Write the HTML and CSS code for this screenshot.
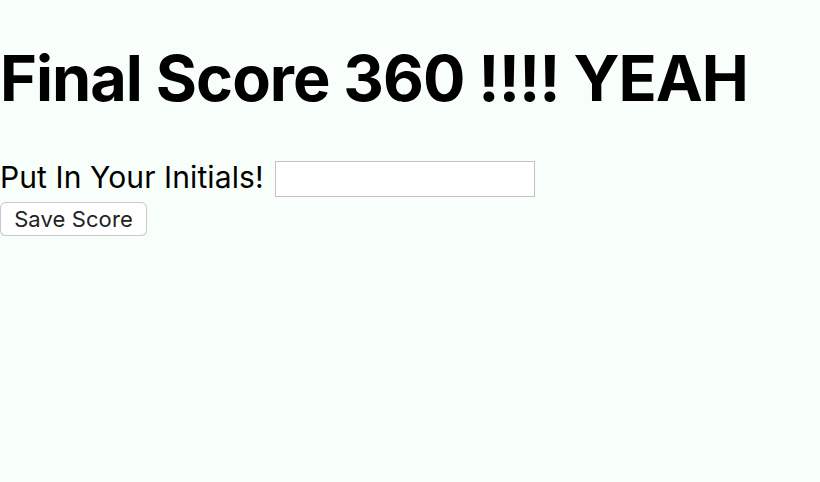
FILE: index.html
```html
<!DOCTYPE html>
<html>
<head>
<meta charset="utf-8">
<link rel="stylesheet" href="styles.css">
</head>
<body>
<main class="page">
  <h1 class="title">Final Score 360 !!!! YEAH</h1>
  <form class="form">
    <div class="row">
      <label class="label" for="initials">Put In Your Initials!</label>
      <input class="input" id="initials" type="text">
    </div>
    <button class="btn" type="button">Save Score</button>
  </form>
</main>
</body>
</html>
```

FILE: styles.css
```css
html, body {
  margin: 0;
  padding: 0;
  background: #f8fffa;
  font-family: Inter, "Noto Sans", sans-serif;
  color: #000;
}
.page {
  padding-top: 40px;
}
.title {
  margin: 0;
  font-size: 63px;
  font-weight: 700;
  line-height: 76px;
  letter-spacing: -1px;
}
.form {
  margin-top: 45px;
  display: flex;
  flex-direction: column;
  align-items: flex-start;
  gap: 5px;
}
.row {
  display: flex;
  align-items: flex-start;
  gap: 11px;
}
.label {
  font-size: 30px;
  line-height: 33px;
  letter-spacing: 0.1px;
}
.input {
  box-sizing: border-box;
  width: 260px;
  height: 36px;
  border: 1px solid #c2c2c2;
  background: #fff;
  margin: 0;
}
.btn {
  box-sizing: border-box;
  width: 147px;
  height: 34px;
  font-family: Inter, "Noto Sans", sans-serif;
  font-size: 22px;
  letter-spacing: 0.1px;
  color: #222;
  background: #fff;
  border: 1px solid #c8c8c8;
  border-radius: 6px;
  padding: 0;
  box-shadow: 0 1px 1px rgba(0,0,0,0.1);
}
```
